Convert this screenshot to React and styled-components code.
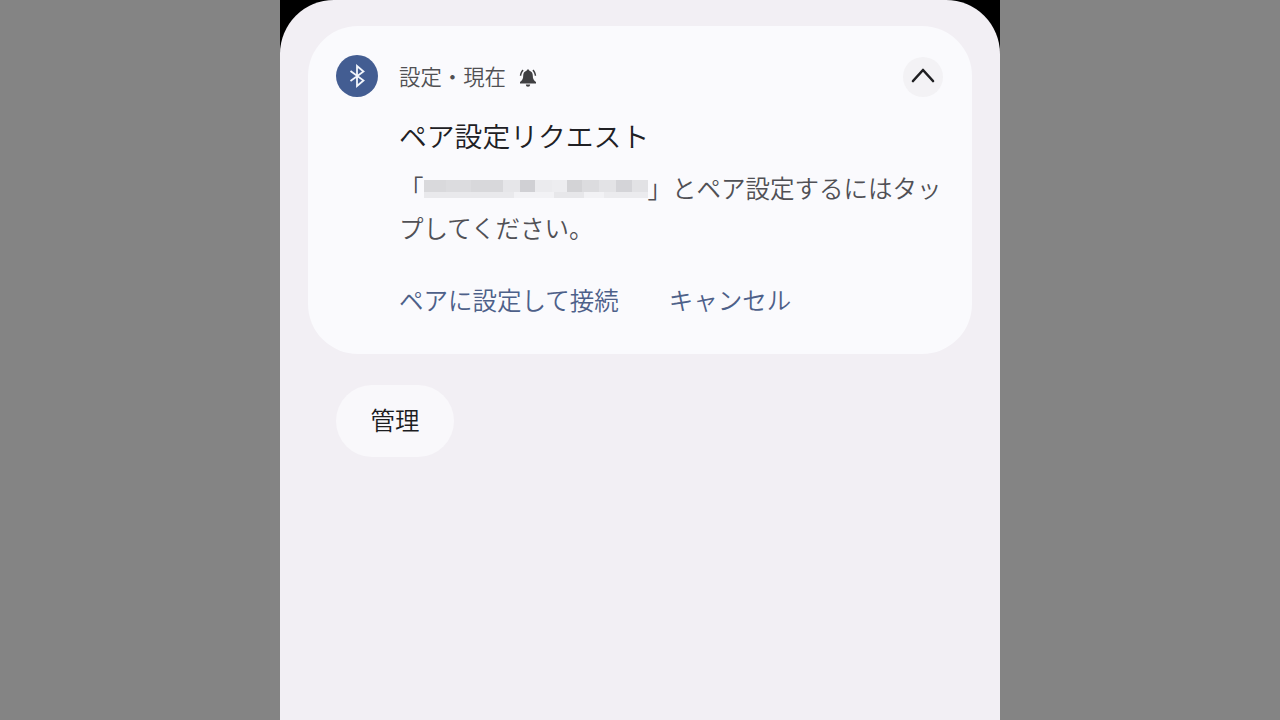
import styled, { createGlobalStyle } from "styled-components";

const GlobalStyle = createGlobalStyle`
    html, body {
        margin: 0;
        padding: 0;
        background-color: #848484;
    }
    body {
        font-family: "Noto Sans CJK JP", "Noto Sans", sans-serif;
    }
`;

const Page = styled.div`
    width: 1280px;
    height: 720px;
    display: flex;
    justify-content: center;
    overflow: hidden;
`;

const Phone = styled.div`
    width: 720px;
    height: 720px;
    background-color: #000;
`;

const Shade = styled.div`
    height: 720px;
    box-sizing: border-box;
    padding: 26px 28px 0;
    background-color: #f2eff4;
    border-radius: 54px 54px 0 0;
`;

const Card = styled.section`
    height: 328px;
    box-sizing: border-box;
    padding: 28px 28px 0;
    background-color: #fafafd;
    border-radius: 50px;
    display: flex;
    flex-direction: column;
`;

const Header = styled.header`
    height: 44px;
    display: flex;
    align-items: center;
`;

const AppIcon = styled.div`
    width: 42px;
    height: 42px;
    border-radius: 50%;
    background-color: #435d92;
    display: flex;
    align-items: center;
    justify-content: center;
    margin-right: 21px;
    flex: none;
`;

const Meta = styled.span`
    font-size: 21.4px;
    line-height: 44px;
    font-weight: 350;
    color: #505053;
`;

const BellIcon = styled.svg`
    width: 20px;
    height: 20px;
    margin: 3px 0 0 12px;
    flex: none;
`;

const Collapse = styled.button`
    width: 40px;
    height: 40px;
    margin: 2px 1px 0 auto;
    padding: 0 0 3px;
    border: none;
    border-radius: 50%;
    background-color: #f3f2f5;
    display: flex;
    align-items: center;
    justify-content: center;
`;

const Body = styled.div`
    padding: 0 0 0 63px;
`;

const Title = styled.h1`
    margin: 17px 0 0;
    font-size: 27.8px;
    line-height: 40px;
    font-weight: 350;
    color: #202024;
`;

const Message = styled.p`
    margin: 13px 0 0;
    font-size: 24.5px;
    line-height: 40px;
    font-weight: 350;
    color: #505055;
`;

const Line = styled.span`
    display: block;
    white-space: nowrap;
`;

const Masked = styled.svg`
    width: 224px;
    height: 18px;
    vertical-align: 0;
`;

const Actions = styled.div`
    margin-top: 32px;
    display: flex;
    gap: 50px;
`;

const Action = styled.button`
    padding: 0;
    border: none;
    background: none;
    font-family: inherit;
    font-size: 24.5px;
    line-height: 40px;
    font-weight: 350;
    color: #4d6089;
`;

const Footer = styled.div`
    padding: 31px 0 0 28px;
`;

const Manage = styled.button`
    width: 118px;
    height: 72px;
    padding: 0 0 4px;
    border: none;
    border-radius: 36px;
    background-color: #f9f8fb;
    font-family: inherit;
    font-size: 24.5px;
    font-weight: 350;
    color: #1c1c1f;
`;

const mosaic = [
    [0, 0, 22, 12, "#d9d9dc"], [22, 0, 25, 12, "#dcdcdf"], [47, 0, 32, 12, "#d8d8db"], [79, 0, 17, 12, "#e6e6e9"],
    [96, 0, 15, 12, "#d0d0d4"], [111, 0, 17, 12, "#ebebee"], [128, 0, 15, 12, "#ededf0"], [143, 0, 15, 12, "#d3d3d6"],
    [158, 0, 17, 12, "#dcdcdf"], [175, 0, 17, 12, "#e3e3e6"], [192, 0, 16, 12, "#d4d4d8"], [208, 0, 16, 12, "#e2e2e5"],
    [0, 12, 90, 6, "#e9e9ec"], [90, 12, 40, 6, "#f2f2f5"], [130, 12, 30, 6, "#e7e7ea"], [160, 12, 20, 6, "#f2f2f5"], [180, 12, 44, 6, "#ebebee"],
];

const App = () => (
    <>
        <GlobalStyle />
        <Page>
            <Phone>
                <Shade>
                    <Card>
                        <Header>
                            <AppIcon>
                                <svg width="24" height="24" viewBox="0 0 24 24" fill="none" stroke="#f2f5fb" strokeWidth="1.8">
                                    <path d="M5.500 7 18.500 16.500 12 22V2l6.500 5.500-13 9.500" />
                                </svg>
                            </AppIcon>
                            <Meta>設定・現在</Meta>
                            <BellIcon viewBox="0 0 20 20" fill="#3f3f42">
                                <path d="M10 1.500c.8 0 1.300.5 1.400 1.200 2.400.6 3.400 2.600 3.400 5 0 2.800.8 4.400 3.200 6.300v1.400H2V14c2.400-1.900 3.200-3.500 3.200-6.300 0-2.400 1-4.400 3.400-5 .1-.7.600-1.200 1.400-1.200z" />
                                <path d="M7.800 16.500h4.400a2.200 2.200 0 0 1-4.400 0z" />
                                <path d="M4.600 1.500 5.600 2.700C4.200 4 3.500 5.700 3.300 7.800H1.800C2 5.200 3 3.100 4.600 1.500zM15.400 1.500C17 3.100 18 5.200 18.200 7.800h-1.500c-.2-2.100-.9-3.800-2.300-5.100z" />
                            </BellIcon>
                            <Collapse aria-label="collapse">
                                <svg width="26" height="16" viewBox="0 0 26 16" fill="none" stroke="#1f1f22" strokeWidth="2.600" strokeLinecap="round" strokeLinejoin="round">
                                    <path d="M3 13 13 2l10 11" />
                                </svg>
                            </Collapse>
                        </Header>
                        <Body>
                            <Title>ペア設定リクエスト</Title>
                            <Message>
                                <Line>
                                    「
                                    <Masked viewBox="0 0 224 18">
                                        {mosaic.map(([x, y, w, h, fill]) => (
                                            <rect key={`${x}-${y}`} x={x} y={y} width={w} height={h} fill={fill} />
                                        ))}
                                    </Masked>
                                    」とペア設定するにはタッ
                                </Line>
                                <Line>プしてください。</Line>
                            </Message>
                            <Actions>
                                <Action>ペアに設定して接続</Action>
                                <Action>キャンセル</Action>
                            </Actions>
                        </Body>
                    </Card>
                    <Footer>
                        <Manage>管理</Manage>
                    </Footer>
                </Shade>
            </Phone>
        </Page>
    </>
);

export default App;
